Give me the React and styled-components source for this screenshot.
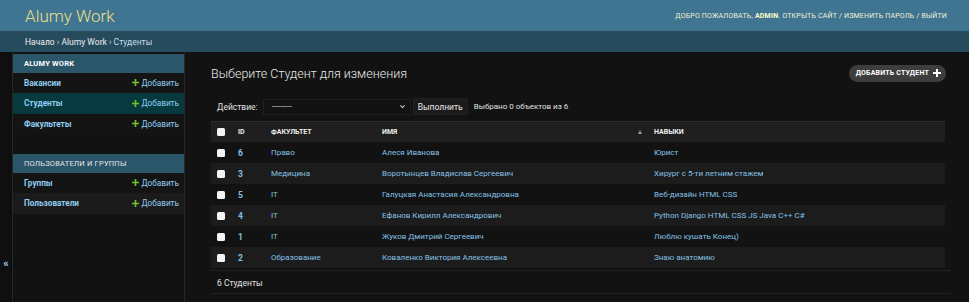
import styled, { createGlobalStyle } from "styled-components";

const GlobalStyle = createGlobalStyle`
  html, body {
    margin: 0;
    padding: 0;
    background: #121212;
  }
  body {
    font-family: Roboto, "Liberation Sans", "Noto Sans", sans-serif;
    color: #e0e0e0;
  }
  a {
    text-decoration: none;
  }
`;

const Page = styled.div`
  width: 969px;
  height: 302px;
  overflow: hidden;
  display: flex;
  flex-direction: column;
  background: #121212;
`;

const Header = styled.header`
  height: 31px;
  flex: none;
  background: #3f7591;
  display: flex;
  align-items: center;
  justify-content: space-between;
  padding: 0 22px 0 25px;
`;

const Branding = styled.h1`
  margin: 0;
  font-size: 17px;
  font-weight: 300;
  color: #eadf8c;
`;

const UserTools = styled.div`
  font-size: 7px;
  text-transform: uppercase;
  letter-spacing: 0.2px;
  color: #f2f2d4;
  strong {
    color: #ffffcc;
    font-weight: 700;
  }
`;

const Breadcrumbs = styled.div`
  height: 21px;
  flex: none;
  background: #264b5d;
  display: flex;
  align-items: center;
  padding: 0 25px;
  font-size: 8.5px;
  color: #c4dce8;
  a {
    color: #eeeeee;
  }
`;

const Body = styled.div`
  flex: 1;
  display: flex;
  min-height: 0;
`;

const Toggle = styled.div`
  width: 13px;
  flex: none;
  background: #0f0f0f;
  border-right: 1px solid #262626;
  display: flex;
  justify-content: center;
  padding-top: 205px;
  box-sizing: border-box;
  color: #9fd4f0;
  font-size: 11px;
  font-weight: 700;
`;

const Sidebar = styled.nav`
  width: 172px;
  flex: none;
  border-right: 1px solid #262626;
  padding-top: 2px;
  box-sizing: border-box;
  background: #121212;
`;

const Module = styled.div`
  margin-bottom: 20px;
`;

const Caption = styled.div`
  height: 18.5px;
  background: #2b5569;
  display: flex;
  align-items: center;
  padding-left: 11px;
  font-size: 7.5px;
  text-transform: uppercase;
  letter-spacing: 0.2px;
  color: ${(p) => (p.$bold ? "#ffffff" : "#e6e6e6")};
  font-weight: ${(p) => (p.$bold ? 700 : 400)};
`;

const ModelRow = styled.div`
  height: 20.5px;
  display: flex;
  align-items: center;
  justify-content: space-between;
  padding: 0 5px 0 11px;
  background: ${(p) => (p.$selected ? "#063a3e" : p.$even ? "#1b1b1b" : "#141414")};
`;

const ModelLink = styled.a`
  color: #8fcdf0;
  font-size: 8.2px;
  font-weight: 700;
`;

const AddLink = styled.a`
  display: flex;
  align-items: center;
  gap: 2px;
  font-size: 8.2px;
  color: #8fcdf0;
`;

const Main = styled.main`
  flex: 1;
  padding: 12px 23px 0 26px;
  min-width: 0;
`;

const TitleRow = styled.div`
  display: flex;
  align-items: center;
  justify-content: space-between;
  height: 18px;
`;

const Title = styled.h1`
  margin: 0;
  font-size: 12.5px;
  font-weight: 300;
  color: #e8e8e8;
`;

const AddButton = styled.a`
  display: flex;
  align-items: center;
  gap: 4px;
  height: 17px;
  padding: 0 5px 0 7px;
  border-radius: 9px;
  background: #3d3d3d;
  color: #ffffff;
  font-size: 7px;
  font-weight: 700;
  text-transform: uppercase;
  letter-spacing: 0.2px;
`;

const Actions = styled.div`
  margin-top: 15px;
  height: 19px;
  display: flex;
  align-items: center;
  padding-left: 6px;
  font-size: 8.5px;
  color: #e0e0e0;
`;

const Label = styled.span`
  margin-right: 5px;
`;

const Select = styled.div`
  width: 148px;
  height: 16px;
  box-sizing: border-box;
  border: 1px solid #1f1f1f;
  background: #121212;
  display: flex;
  align-items: center;
  justify-content: space-between;
  padding: 0 4px 0 8px;
  color: #e0e0e0;
  font-size: 8px;
`;

const Go = styled.button`
  margin-left: 2px;
  height: 17px;
  padding: 0 4px;
  border: 1px solid #222222;
  border-radius: 2px;
  background: #1b1b1b;
  color: #e8e8e8;
  font-family: inherit;
  font-size: 8.5px;
`;

const Counter = styled.span`
  margin-left: 6px;
  font-size: 8px;
`;

const Table = styled.table`
  margin-top: 5px;
  width: 734px;
  border-collapse: collapse;
  table-layout: fixed;
  font-size: 8px;
`;

const Th = styled.th`
  height: 20px;
  padding: 0 0 0 ${(p) => p.$pl ?? 7}px;
  text-align: left;
  background: #1f1f1f;
  border-top: 1px solid #2b2b2b;
  font-size: 7px;
  font-weight: 700;
  text-transform: uppercase;
  color: #eeeeee;
  position: relative;
`;

const SortArrow = styled.span`
  position: absolute;
  right: 5px;
  top: 8px;
  width: 0;
  height: 0;
  border-left: 2.5px solid transparent;
  border-right: 2.5px solid transparent;
  border-bottom: 4px solid #9a9a9a;
`;

const Tr = styled.tr`
  height: 21px;
  background: ${(p) => (p.$even ? "#1c1c1c" : "#121212")};
`;

const Td = styled.td`
  padding: 0 0 0 ${(p) => p.$pl ?? 7}px;
  color: #84c2e6;
  font-weight: ${(p) => (p.$bold ? 700 : 400)};
  font-size: ${(p) => (p.$bold ? 8.5 : 8)}px;
  white-space: nowrap;
`;

const Box = styled.span`
  display: inline-block;
  width: 8px;
  height: 8px;
  border-radius: 1.5px;
  background: #f4f4f4;
  vertical-align: middle;
`;

const Paginator = styled.div`
  width: 734px;
  margin-top: 2px;
  height: 21px;
  border-top: 1px solid #222222;
  border-bottom: 1px solid #222222;
  display: flex;
  align-items: center;
  padding: 1px 0 0 6px;
  box-sizing: content-box;
  font-size: 8.5px;
  color: #e0e0e0;
`;

const Plus = ({ color = "#70bf2b", size = 7 }) => (
  <svg width={size} height={size} viewBox="0 0 10 10">
    <path d="M3.8 0h2.4v3.8H10v2.4H6.2V10H3.8V6.2H0V3.8h3.8z" fill={color} />
  </svg>
);

const Chevron = () => (
  <svg width="7" height="7" viewBox="0 0 10 10">
    <path d="M2 3.5l3 3 3-3" stroke="#cfcfcf" strokeWidth="1.6" fill="none" />
  </svg>
);

const modules = [
  {
    title: "Alumy Work",
    bold: true,
    models: ["Вакансии", "Студенты", "Факультеты"],
    selected: "Студенты",
  },
  {
    title: "Пользователи и группы",
    bold: false,
    models: ["Группы", "Пользователи"],
  },
];

const students = [
  { id: 6, faculty: "Право", name: "Алеся Иванова", skills: "Юрист" },
  { id: 3, faculty: "Медицина", name: "Воротынцев Владислав Сергеевич", skills: "Хирург с 5-ти летним стажем" },
  { id: 5, faculty: "IT", name: "Галуцкая Анастасия Александровна", skills: "Веб-дизайн HTML CSS" },
  { id: 4, faculty: "IT", name: "Ефанов Кирилл Александрович", skills: "Python Django HTML CSS JS Java C++ C#" },
  { id: 1, faculty: "IT", name: "Жуков Дмитрий Сергеевич", skills: "Люблю кушать Конец)" },
  { id: 2, faculty: "Образование", name: "Коваленко Виктория Алексеевна", skills: "Знаю анатомию" },
];

export default function App() {
  return (
    <Page>
      <GlobalStyle />
      <Header>
        <Branding>Alumy Work</Branding>
        <UserTools>
          Добро пожаловать, <strong>admin</strong>. Открыть сайт / Изменить пароль / Выйти
        </UserTools>
      </Header>
      <Breadcrumbs>
        <a>Начало</a>&nbsp;›&nbsp;<a>Alumy Work</a>&nbsp;›&nbsp;Студенты
      </Breadcrumbs>
      <Body>
        <Toggle>«</Toggle>
        <Sidebar>
          {modules.map((m) => (
            <Module key={m.title}>
              <Caption $bold={m.bold}>{m.title}</Caption>
              {m.models.map((name, i) => (
                <ModelRow key={name} $selected={m.selected === name} $even={i % 2 === 1}>
                  <ModelLink>{name}</ModelLink>
                  <AddLink>
                    <Plus />
                    Добавить
                  </AddLink>
                </ModelRow>
              ))}
            </Module>
          ))}
        </Sidebar>
        <Main>
          <TitleRow>
            <Title>Выберите Студент для изменения</Title>
            <AddButton>
              Добавить Студент
              <Plus color="#ffffff" size={8} />
            </AddButton>
          </TitleRow>
          <Actions>
            <Label>Действие:</Label>
            <Select>
              <span>---------</span>
              <Chevron />
            </Select>
            <Go>Выполнить</Go>
            <Counter>Выбрано 0 объектов из 6</Counter>
          </Actions>
          <Table>
            <colgroup>
              <col style={{ width: 20 }} />
              <col style={{ width: 33 }} />
              <col style={{ width: 111 }} />
              <col style={{ width: 272 }} />
              <col />
            </colgroup>
            <thead>
              <tr>
                <Th $pl={6}>
                  <Box />
                </Th>
                <Th>ID</Th>
                <Th>Факультет</Th>
                <Th>
                  Имя
                  <SortArrow />
                </Th>
                <Th>Навыки</Th>
              </tr>
            </thead>
            <tbody>
              {students.map((s, i) => (
                <Tr key={s.id} $even={i % 2 === 1}>
                  <Td $pl={6}>
                    <Box />
                  </Td>
                  <Td $bold>{s.id}</Td>
                  <Td>{s.faculty}</Td>
                  <Td>{s.name}</Td>
                  <Td>{s.skills}</Td>
                </Tr>
              ))}
            </tbody>
          </Table>
          <Paginator>6 Студенты</Paginator>
        </Main>
      </Body>
    </Page>
  );
}
